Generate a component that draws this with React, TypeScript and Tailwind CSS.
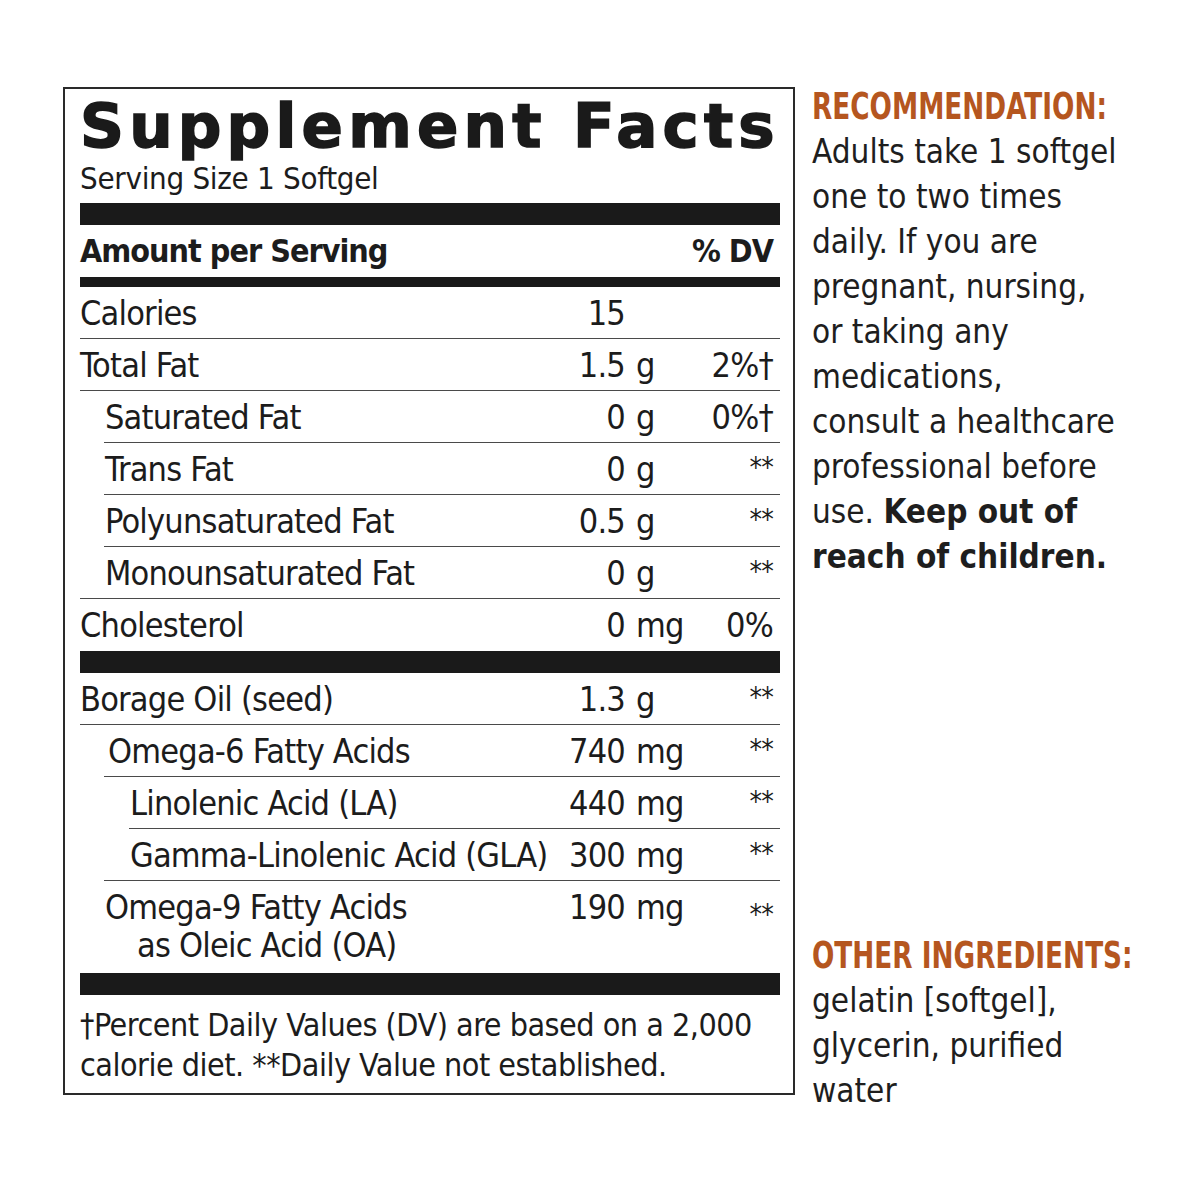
import React from 'react';

type Row = {
  name: string;
  name2?: string;
  indent: string;
  num: string;
  unit: string;
  dv: string;
  line: string;
  tall?: boolean;
};

const fats: Row[] = [
  { name: 'Calories', indent: 'pl-0', num: '15', unit: '', dv: '', line: 'left-0' },
  { name: 'Total Fat', indent: 'pl-0', num: '1.5', unit: 'g', dv: '2%†', line: 'left-0' },
  { name: 'Saturated Fat', indent: 'pl-[25px]', num: '0', unit: 'g', dv: '0%†', line: 'left-[24px]' },
  { name: 'Trans Fat', indent: 'pl-[25px]', num: '0', unit: 'g', dv: '**', line: 'left-[24px]' },
  { name: 'Polyunsaturated Fat', indent: 'pl-[25px]', num: '0.5', unit: 'g', dv: '**', line: 'left-[24px]' },
  { name: 'Monounsaturated Fat', indent: 'pl-[25px]', num: '0', unit: 'g', dv: '**', line: 'left-0' },
  { name: 'Cholesterol', indent: 'pl-0', num: '0', unit: 'mg', dv: '0%', line: '' },
];

const oils: Row[] = [
  { name: 'Borage Oil (seed)', indent: 'pl-0', num: '1.3', unit: 'g', dv: '**', line: 'left-0' },
  { name: 'Omega-6 Fatty Acids', indent: 'pl-[28px]', num: '740', unit: 'mg', dv: '**', line: 'left-[24px]' },
  { name: 'Linolenic Acid (LA)', indent: 'pl-[50px]', num: '440', unit: 'mg', dv: '**', line: 'left-[49px]' },
  { name: 'Gamma-Linolenic Acid (GLA)', indent: 'pl-[50px]', num: '300', unit: 'mg', dv: '**', line: 'left-[24px]' },
  {
    name: 'Omega-9 Fatty Acids',
    name2: 'as Oleic Acid (OA)',
    indent: 'pl-[25px]',
    num: '190',
    unit: 'mg',
    dv: '**',
    line: '',
    tall: true,
  },
];

const narrow = "font-['DejaVu_Sans_Condensed','Liberation_Sans',sans-serif]";

const FactRow: React.FC<{ row: Row }> = ({ row }) => (
  <div
    className={`relative flex ${row.tall ? 'h-[92px] items-start pt-[9px]' : 'h-[52px] items-center'} text-[34px] leading-none tracking-[-0.8px] text-[#1c1c1c]`}
  >
    <div className={`w-[455px] shrink-0 whitespace-nowrap ${row.indent}`}>
      <div>{row.name}</div>
      {row.name2 && <div className="pl-[32px] pt-[4px]">{row.name2}</div>}
    </div>
    <div className="w-[90px] shrink-0 text-right">{row.num}</div>
    <div className="w-[65px] shrink-0 pl-[11px]">{row.unit}</div>
    <div className={`flex-1 pr-[7px] text-right ${row.dv === '**' ? 'text-[28px] self-start pt-[11px]' : ''}`}>
      {row.dv}
    </div>
    {row.line && <div className={`absolute bottom-0 right-0 h-[1.5px] bg-[#4a4a4a] ${row.line}`} />}
  </div>
);

const FactsPanel: React.FC = () => (
  <div className={`w-[732px] h-[1008px] shrink-0 border-2 border-[#2a2a2a] pl-[15px] pr-[13px] ${narrow}`}>
    <h1 className="pt-[6px] h-[70px] font-['DejaVu_Sans',sans-serif] text-[61px] font-bold leading-none tracking-[5.2px] text-[#1a1a1a] whitespace-nowrap [-webkit-text-stroke:1.6px_#1a1a1a]">
      Supplement Facts
    </h1>
    <div className="h-[44px] pt-[4px] text-[31px] leading-none tracking-[-0.3px] text-[#1c1c1c]">Serving Size 1 Softgel</div>
    <div className="h-[22px] bg-[#1a1a1a]" />
    <div className="flex h-[52px] items-center justify-between text-[32px] font-bold leading-none tracking-[-1px] text-[#1c1c1c]">
      <span>Amount per Serving</span>
      <span className="pr-[7px]">% DV</span>
    </div>
    <div className="h-[10px] bg-[#1a1a1a]" />
    {fats.map((r) => (
      <FactRow key={r.name} row={r} />
    ))}
    <div className="h-[22px] bg-[#1a1a1a]" />
    {oils.map((r) => (
      <FactRow key={r.name} row={r} />
    ))}
    <div className="h-[22px] bg-[#1a1a1a]" />
    <div className="pt-[10px] text-[32px] leading-[40px] tracking-[-0.5px] text-[#1c1c1c] whitespace-nowrap">
      <div>†Percent Daily Values (DV) are based on a 2,000</div>
      <div>calorie diet. **Daily Value not established.</div>
    </div>
  </div>
);

const recLines = [
  'Adults take 1 softgel',
  'one to two times',
  'daily. If you are',
  'pregnant, nursing,',
  'or taking any',
  'medications,',
  'consult a healthcare',
  'professional before',
];

const Heading: React.FC<{ children: React.ReactNode }> = ({ children }) => (
  <div className="h-[45px] whitespace-nowrap">
    <span className="inline-block origin-left scale-x-[0.77] text-[38px] font-bold text-[#b5561f]">{children}</span>
  </div>
);

const SideNotes: React.FC = () => (
  <div className={`pl-[17px] -mt-[3px] text-[33px] leading-[45px] text-[#1e1e1e] whitespace-nowrap ${narrow}`}>
    <Heading>RECOMMENDATION:</Heading>
    {recLines.map((l) => (
      <div key={l}>{l}</div>
    ))}
    <div>
      use. <span className="font-bold">Keep out of</span>
    </div>
    <div className="font-bold">reach of children.</div>
    <div className="mt-[354px]">
      <Heading>OTHER INGREDIENTS:</Heading>
    </div>
    <div>gelatin [softgel],</div>
    <div>glycerin, purified</div>
    <div>water</div>
  </div>
);

export default function App() {
  return (
    <div className="w-[1200px] h-[1200px] bg-white pl-[63px] pt-[87px] flex items-start">
      <FactsPanel />
      <SideNotes />
    </div>
  );
}
